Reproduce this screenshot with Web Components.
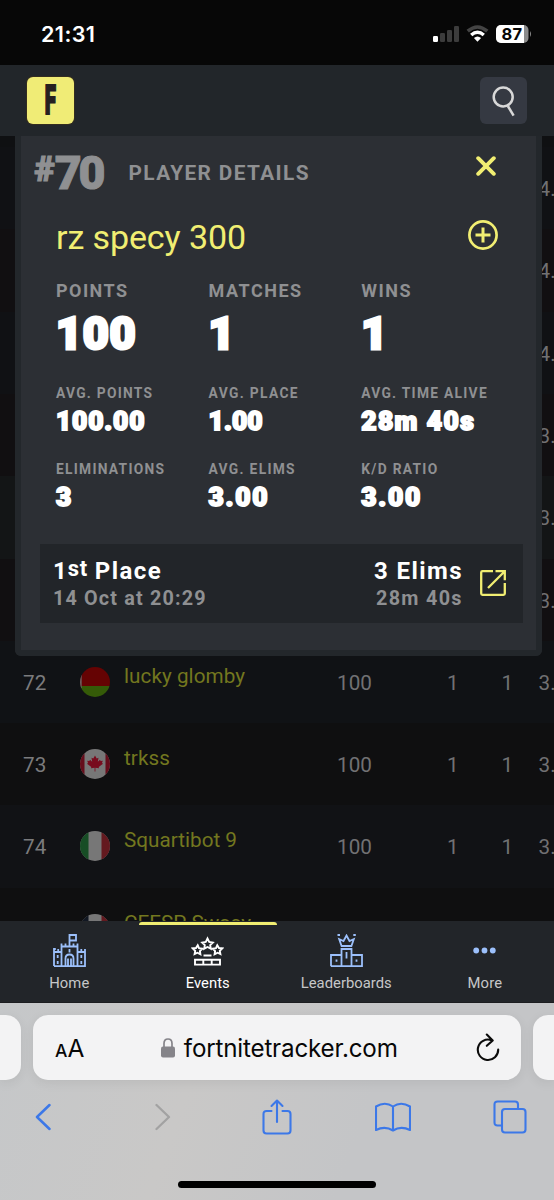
<!DOCTYPE html>
<html lang="en">
<head>
<meta charset="utf-8">
<title>Player details</title>
<style>
html,body{margin:0;background:#070707}
body{width:554px;height:1200px;overflow:hidden;font-family:Roboto,"Liberation Sans",sans-serif}
</style>
</head>
<body>
<tracker-app></tracker-app>
<script>
const define = (name, html, setup) => customElements.define(name, class extends HTMLElement {
  connectedCallback() {
    if (this.shadowRoot) return;
    const root = this.attachShadow({mode: 'open'});
    root.innerHTML = typeof html === 'function' ? html(this) : html;
    if (setup) setup(this, root);
  }
});

/* A line of text tracked out (or in) to span a given width. */
define('fit-line', `<style>:host{display:block;width:max-content;white-space:pre}span{display:inline-block}</style><span><slot></slot></span>`, (el, root) => {
  const span = root.querySelector('span');
  const want = +el.getAttribute('span');
  if (!want) return;
  const gap = (want - span.getBoundingClientRect().width) / (el.textContent.length - 1);
  span.style.letterSpacing = gap + 'px';
  span.style.marginRight = -gap + 'px';
});

define('status-bar', `<style>
:host{display:flex;height:65px;background:#070707;color:#fff;font-family:Inter,sans-serif;box-sizing:border-box;padding:21px 22px 0 41px;justify-content:space-between}
fit-line{font:600 21.6px/27px Inter,sans-serif}
.r{display:flex;align-items:flex-start;padding-top:4px}
.b{position:relative;width:36px;height:18px;display:flex}
.n{position:absolute;left:5.5px;top:0;font:700 16.5px/18.5px Inter,sans-serif;color:#070707}
</style>
<fit-line span="54">21:31</fit-line>
<div class="r">
<svg width="26" height="17" style="margin-right:7px" viewBox="0 0 26 17"><rect y="11" width="5" height="6" rx="1.2" fill="#fff"/><g fill="#3c3c3c"><rect x="7" y="8" width="5" height="9" rx="1.2"/><rect x="14" y="5" width="5" height="12" rx="1.2"/><rect x="21" y="1" width="5" height="16" rx="1.2"/></g></svg>
<svg width="23" height="17" style="margin-right:7px" viewBox="0 0 23 17"><path d="M1.7 6.2Q11.5-2.2 21.3 6.2" fill="none" stroke="#444" stroke-width="3.6"/><path d="M5.2 10Q11.5 4.5 17.8 10" fill="none" stroke="#fff" stroke-width="3.4"/><path d="M7.9 13Q11.5 10 15.1 13L11.5 16.8Z" fill="#fff"/></svg>
<div class="b"><svg width="36" height="18" viewBox="0 0 36 18"><defs><clipPath id="c"><rect width="32.5" height="18" rx="5"/></clipPath></defs><g clip-path="url(#c)"><rect width="33" height="18" fill="#8b8b8b"/><rect width="28" height="18" fill="#fff"/></g><path d="M34 6Q36 9 34 12Z" fill="#8b8b8b"/></svg><fit-line class="n" span="20.5">87</fit-line></div>
</div>`);

define('site-header', `<style>
:host{display:flex;height:71px;box-sizing:border-box;background:#22262a;padding:12px 27px 0;justify-content:space-between}
.l,.s{width:47px;height:47px;border-radius:6px;display:flex;align-items:center;justify-content:center}
.l{background:#f0ec76;box-shadow:0 0 0 1px #342d20}
.l span{font:900 40px/46px Roboto,sans-serif;color:#252020;transform:translateX(-.5px) scaleX(.51);-webkit-text-stroke:2px #252020}
.s{background:#353942}
</style>
<div class="l"><span>F</span></div>
<div class="s"><svg width="24" height="32" viewBox="0 0 24 32" fill="none" stroke="#d8d8d8" stroke-width="2.5"><circle cx="11.2" cy="12" r="9.5"/><path d="M15.8 21L21.6 30.6"/></svg></div>`);

const flags = {
  by: '<rect width="30" height="19" fill="#650303"/><rect y="19" width="30" height="11" fill="#355b08"/><path d="M0 8H1.7V21H0Z" fill="#686060"/>',
  ca: '<rect width="30" height="30" fill="#777"/><path d="M0 0H4.5V30H0ZM25.5 0H30V30H25.5Z" fill="#650d1b"/><path d="M15 6.6L16.7 9.6 18.5 8.7 17.8 12.8 20 10.7 20.7 12 22.8 11.8 22 14 23 14.7 18.7 18 19 19.3 15.4 18.8V22.5H14.6V18.8L11 19.3 11.3 18 7 14.7 8 14 7.2 11.8 9.3 12 10 10.7 12.2 12.8 11.5 8.7 13.3 9.6Z" fill="#780c1e"/>',
  it: '<rect width="30" height="30" fill="#777"/><path d="M0 0H8.5V30H0Z" fill="#174d25"/><path d="M21.5 0H30V30H21.5Z" fill="#64191f"/>',
  fr: '<rect width="30" height="30" fill="#777"/><path d="M0 0H8.5V30H0Z" fill="#111722"/><path d="M21.5 0H30V30H21.5Z" fill="#64191f"/>'
};
define('rank-row', el => `<style>
:host{display:grid;grid-template-columns:23px 56.5px 44.5px 196px 69px 63px 54px 1fr;height:82.3px;line-height:84px;font-size:20.7px;color:#717173;background:var(--row,#101115);white-space:nowrap}
.n{color:#7b7b7d}
svg{border-radius:50%;margin-top:26px}
.p{color:#73771f;line-height:70px;font-size:20.7px}
.c{text-align:center}
</style>
<i></i><span class="n">${el.getAttribute('rank') || ''}</span>
<span>${el.getAttribute('flag') ? `<svg width="30" height="30" viewBox="0 0 30 30">${flags[el.getAttribute('flag')]}</svg>` : ''}</span>
<span class="p"><slot></slot></span>
<span class="c">${el.getAttribute('points') || ''}</span>
<span class="c" style="padding-left:58px;width:0">${el.hasAttribute('points') ? 1 : ''}</span>
<span class="c" style="padding-left:49.5px;width:0">${el.hasAttribute('points') ? 1 : ''}</span>
<span style="padding-left:32.5px">${el.getAttribute('avg')}</span>`);

define('rank-table', `<style>
:host{display:block;height:100%;overflow:hidden;background:#0f1012;padding-top:11.1px;box-sizing:border-box}
</style>
<rank-row avg="4." style="--row:#101114"></rank-row>
<rank-row avg="4." style="--row:#110f11"></rank-row>
<rank-row avg="4." style="--row:#101114"></rank-row>
<rank-row avg="3." style="--row:#110f11"></rank-row>
<rank-row avg="3." style="--row:#131516"></rank-row>
<rank-row avg="3." style="--row:#110f11"></rank-row>
<rank-row rank="72" flag="by" points="100" avg="3." style="--row:#101215"><fit-line span="121">lucky glomby</fit-line></rank-row>
<rank-row rank="73" flag="ca" points="100" avg="3." style="--row:#0f0f10"><fit-line span="46">trkss</fit-line></rank-row>
<rank-row rank="74" flag="it" points="100" avg="3." style="--row:#111215"><fit-line span="113">Squartibot 9</fit-line></rank-row>
<rank-row flag="fr" avg="" style="--row:#0f0f10"><fit-line span="127">CEESP Swasy</fit-line></rank-row>`);

define('stat-cell', el => `<style>
:host{display:block}
.k{font:700 13.8px/18px Roboto,sans-serif;color:#8f9092;margin-bottom:4px}
.v{font:900 26.4px/30px Roboto,sans-serif;color:#fff;-webkit-text-stroke:1.9px #fff}
:host([big]) .k{font-size:18px;line-height:22px;margin-bottom:12px}
:host([big]) .v{font-size:45px;line-height:40px;-webkit-text-stroke:3px #fff}
</style><fit-line class="k" span="${el.getAttribute('kw')}">${el.getAttribute('label')}</fit-line><fit-line class="v" ${el.getAttribute('vw') ? `span="${el.getAttribute('vw')}"` : ''}>${el.textContent}</fit-line>`);

define('match-card', `<style>
:host{display:flex;box-sizing:border-box;width:483px;height:79px;margin-left:19px;background:#222529;padding:13.3px 17px 0 13px}
.r{margin-left:auto;display:flex;flex-direction:column;align-items:flex-end}
.a{font:700 24px/28px Roboto,sans-serif;color:#fff}
.b{font:700 19.8px/27px Roboto,sans-serif;color:#8f9092}
.f{display:flex}.f .o{font-size:22px;position:relative;top:-2.5px;margin-left:1px}
svg{margin:12.7px 0 0 18.5px}
</style>
<div><div class="f"><fit-line class="a">1</fit-line><fit-line class="a o" span="19.5">st</fit-line><fit-line class="a" span="73.5"> Place</fit-line></div><fit-line class="b" span="152.5">14 Oct at 20:29</fit-line></div>
<div class="r"><fit-line class="a" span="87.5">3 Elims</fit-line><fit-line class="b" span="85.5">28m 40s</fit-line></div>
<svg width="26" height="26" viewBox="0 0 26 26" fill="none" stroke="#f1ee72" stroke-width="2.3"><path d="M13 1.2H2.5Q1.2 1.2 1.2 2.5V23.5Q1.2 24.8 2.5 24.8H23.5Q24.8 24.8 24.8 23.5V13M8 18L24 2M15.5 1.2H24.8V10.3"/></svg>`);

define('player-panel', `<style>
:host{display:block;box-sizing:border-box;width:527px;height:520px;border:6px solid #23272b;border-top:0;border-radius:0 0 6px 6px;background:#2c2f34}
header,.name{display:flex;justify-content:space-between}
header{height:74px;line-height:74px;color:#8f9092;padding:0 40px 0 13.5px}
.rank{display:flex;width:94px;font-weight:900;-webkit-text-stroke:1px #8f9092}
.h{font-size:35px;line-height:67px;-webkit-text-stroke:1.2px #8f9092}.d{font-size:46.5px;line-height:74px}
.t{font-size:20.8px;font-weight:700;margin-right:auto}
header svg{margin-top:20px}
.name{height:70px;padding:0 38px 0 35px;color:#f1ee72;font-size:34px;line-height:55px;font-weight:400}
.name svg{margin-top:10px}
.g{display:grid;grid-template-columns:152.6px 152.6px 1fr;grid-template-rows:104.3px 75.5px 84.2px;padding-left:35px}
</style>
<header><div class="rank"><fit-line class="h">#</fit-line><fit-line class="d" span="50.5">70</fit-line></div><fit-line class="t" span="180">PLAYER DETAILS</fit-line>
<svg width="20" height="20" viewBox="0 0 20 20" stroke="#f1ee72" stroke-width="3.9" stroke-linecap="round"><path d="M2.2 2.2L17.8 17.8M17.8 2.2L2.2 17.8"/></svg></header>
<div class="name"><fit-line span="190">rz specy 300</fit-line><svg width="30" height="30" viewBox="0 0 30 30" fill="none" stroke="#f1ee72" stroke-width="2.7"><circle cx="15" cy="15" r="13.6"/><path d="M15 7.5V22.5M7.5 15H22.5" stroke-width="3"/></svg></div>
<div class="g">
<stat-cell big label="POINTS" kw="71" vw="79.5">100</stat-cell><stat-cell big label="MATCHES" kw="92.5">1</stat-cell><stat-cell big label="WINS" kw="49.5">1</stat-cell>
<stat-cell label="AVG. POINTS" kw="96" vw="88.5">100.00</stat-cell><stat-cell label="AVG. PLACE" kw="89" vw="54">1.00</stat-cell><stat-cell label="AVG. TIME ALIVE" kw="125.5" vw="112.5">28m 40s</stat-cell>
<stat-cell label="ELIMINATIONS" kw="108">3</stat-cell><stat-cell label="AVG. ELIMS" kw="86" vw="59">3.00</stat-cell><stat-cell label="K/D RATIO" kw="76" vw="59">3.00</stat-cell>
</div>
<match-card></match-card>`);

const tabIcons = {
  home: '<g fill="none" stroke="#9cc0fb" stroke-width="1.8"><path d="M1 32V15H2.8M5.2 17V15M1 18H8.5M1 32.2H32V15M8.5 32V9.5M24.5 32V9.5M8.5 12.5H24.5M12.5 12V9.5M20.5 12V9.5M24.5 18H32M28.3 17.5V15M16.5 12V1H23V6.5H16.5M12.5 32V24.5Q12.5 20.5 16.5 20.5T20.5 24.5V32M15 32V24.5M18 32V24.5M16.5 15V18.5M4.7 21V24M4.7 27V30M28.3 21V24M28.3 27V30"/></g>',
  events: '<g fill="none" stroke="#fff" stroke-width="1.9"><path d="M16.5 4.5L18.2 8 21.8 8.6 19.2 11.1 19.8 14.7 16.5 13 13.2 14.7 13.8 11.1 11.2 8.6 14.8 8Z"/><path d="M6.7 11.2L8 14.2 11.3 14.7 8.9 17 9.4 20.3 6.4 18.7 3.6 20 4.2 16.9 1.7 14.3 5 14ZM26.3 11.2L25 14.2 21.7 14.7 24.1 17 23.6 20.3 26.6 18.7 29.4 20 28.8 16.9 31.3 14.3 28 14ZM12.5 21.5H20.5M4 25.8H29V30.6H4ZM12.3 26V30.6M20.7 26V30.6"/></g>',
  leader: '<g fill="none" stroke="#9cc0fb" stroke-width="1.8"><path d="M1 32.2V21H11.5M21.5 21H32V32.2H1M11.5 32V15H21.5V32M16.5 18V24.5M6.5 25.5V27.8M26.5 25.5V27.8M9.2 5.2L11.6 12H21.4L23.8 5.2 19.5 7 16.5 1.5 13.5 7Z"/><path d="M7.5 1H10M23.3 1H25.8" stroke-width="2"/></g>',
  more: '<g fill="#9cc0fb"><circle cx="8.2" cy="16.5" r="2.9"/><circle cx="16.5" cy="16.5" r="2.9"/><circle cx="24.8" cy="16.5" r="2.9"/></g>'
};
define('nav-tab', el => `<style>
:host{display:flex;flex-direction:column;align-items:center;padding-top:9px;box-sizing:border-box;color:#c6c7c8;font-size:14.8px;line-height:20px;border-top:3px solid transparent}
:host([active]){color:#fff;border-color:#f1ee72;border-radius:3px 3px 0 0}
svg{margin-bottom:5.5px;flex:none;display:block}
</style><svg width="33" height="33" viewBox="0 0 33 33">${tabIcons[el.getAttribute('icon')]}</svg><fit-line span="${el.getAttribute('w')}">${el.textContent}</fit-line>`);
define('tab-nav', `<style>:host{display:grid;grid-template-columns:repeat(4,1fr);height:82px;box-sizing:border-box;background:#222529;padding-top:1px;border-bottom:1px solid #1c1d20}</style>
<nav-tab icon="home" w="40">Home</nav-tab><nav-tab icon="events" w="44" active>Events</nav-tab><nav-tab icon="leader" w="91">Leaderboards</nav-tab><nav-tab icon="more" w="34.5">More</nav-tab>`);

define('browser-chrome', `<style>
:host{display:flex;flex-direction:column;height:197px;background:linear-gradient(110deg,#c5c7c9 0,#c9c8c7 35%,#c4c5c7 65%,#c4c5c7);color:#070707}
.u{display:grid;grid-template-columns:21px 488px 21px;column-gap:12px;height:65px;padding-top:12px;margin-bottom:12px}
.u>div{background:#f3f3f4;border-radius:15px;box-shadow:0 3px 12px rgba(0,0,0,.07)}
.u>div:first-child{border-radius:0 15px 15px 0}.u>div:last-child{border-radius:15px 0 0 15px}
.m{display:flex;align-items:center;padding:0 21px 0 22px}
.aa{display:flex;align-items:baseline;font-family:Inter,sans-serif;line-height:30px;margin:4px 76.5px 0 0}
.aa b{font-weight:500;font-size:17.5px}.aa i{font-style:normal;font-weight:400;font-size:24.5px}
.url{font:400 24.2px/30px Inter,sans-serif;margin:3px auto 0 9px}
.t{display:grid;grid-template-columns:86px 153px 76px 156px 77px;height:50px;align-items:center;justify-items:center}
.t svg{fill:none;stroke:#3c78e8;stroke-width:2.1;stroke-linejoin:round;stroke-linecap:round}
.bar{width:198px;height:7px;border-radius:4px;background:#000;margin:38.5px auto 0 178px}
</style>
<div class="u"><div></div><div class="m"><div class="aa"><b>A</b><i>A</i></div>
<svg width="14" height="20" viewBox="0 0 14 20"><rect y="8.5" width="14" height="11" rx="2" fill="#858489"/><path d="M3 9V5.5Q3 1 7 1T11 5.5V9" fill="none" stroke="#858489" stroke-width="1.7"/></svg>
<fit-line class="url" span="214">fortnitetracker.com</fit-line>
<svg width="24" height="29" viewBox="0 0 24 29" fill="none" stroke="#0a0a0a" stroke-width="2.1" stroke-linecap="round" stroke-linejoin="round"><path d="M15.5 7.2A10.2 10.2 0 1 0 22.2 16.5M10.8 1.5L16.7 7.4 10.8 12.8"/></svg></div><div></div></div>
<div class="t">
<svg width="16" height="28" viewBox="0 0 16 28" style="stroke-width:2.5"><path d="M14.5 2L2 14 14.5 26"/></svg>
<svg width="16" height="28" viewBox="0 0 16 28" style="stroke:#a2a2a2;stroke-width:2.3"><path d="M1.5 2L14 14 1.5 26"/></svg>
<svg width="30" height="36" viewBox="0 0 30 36"><path d="M9.5 12H4.5Q1.5 12 1.5 15V31.5Q1.5 34.5 4.5 34.5H25.5Q28.5 34.5 28.5 31.5V15Q28.5 12 25.5 12H20.5M15 23V1.5M9.5 7L15 1.5 20.5 7"/></svg>
<svg width="36" height="30" viewBox="0 0 36 30"><path d="M18 4.5Q10-1 1 4.5V28Q10 23.5 18 28.5Q26 23.5 35 28V4.5Q26-1 18 4.5V28"/></svg>
<svg width="34" height="34" viewBox="0 0 34 34"><path d="M9 25.5H4.5Q1.5 25.5 1.5 22.5V4.5Q1.5 1.5 4.5 1.5H22Q25 1.5 25 4.5V9"/><rect x="9" y="9" width="23.5" height="23.5" rx="3"/></svg>
</div><div class="bar"></div>`);

define('tracker-app', `<style>
:host{display:flex;flex-direction:column;width:554px;height:1200px}
main{position:relative;height:785px;flex:none}
player-panel{position:absolute;left:15px;top:0}
</style>
<status-bar></status-bar><site-header></site-header>
<main><rank-table></rank-table><player-panel></player-panel></main>
<tab-nav></tab-nav><browser-chrome></browser-chrome>`);
</script>
</body>
</html>
